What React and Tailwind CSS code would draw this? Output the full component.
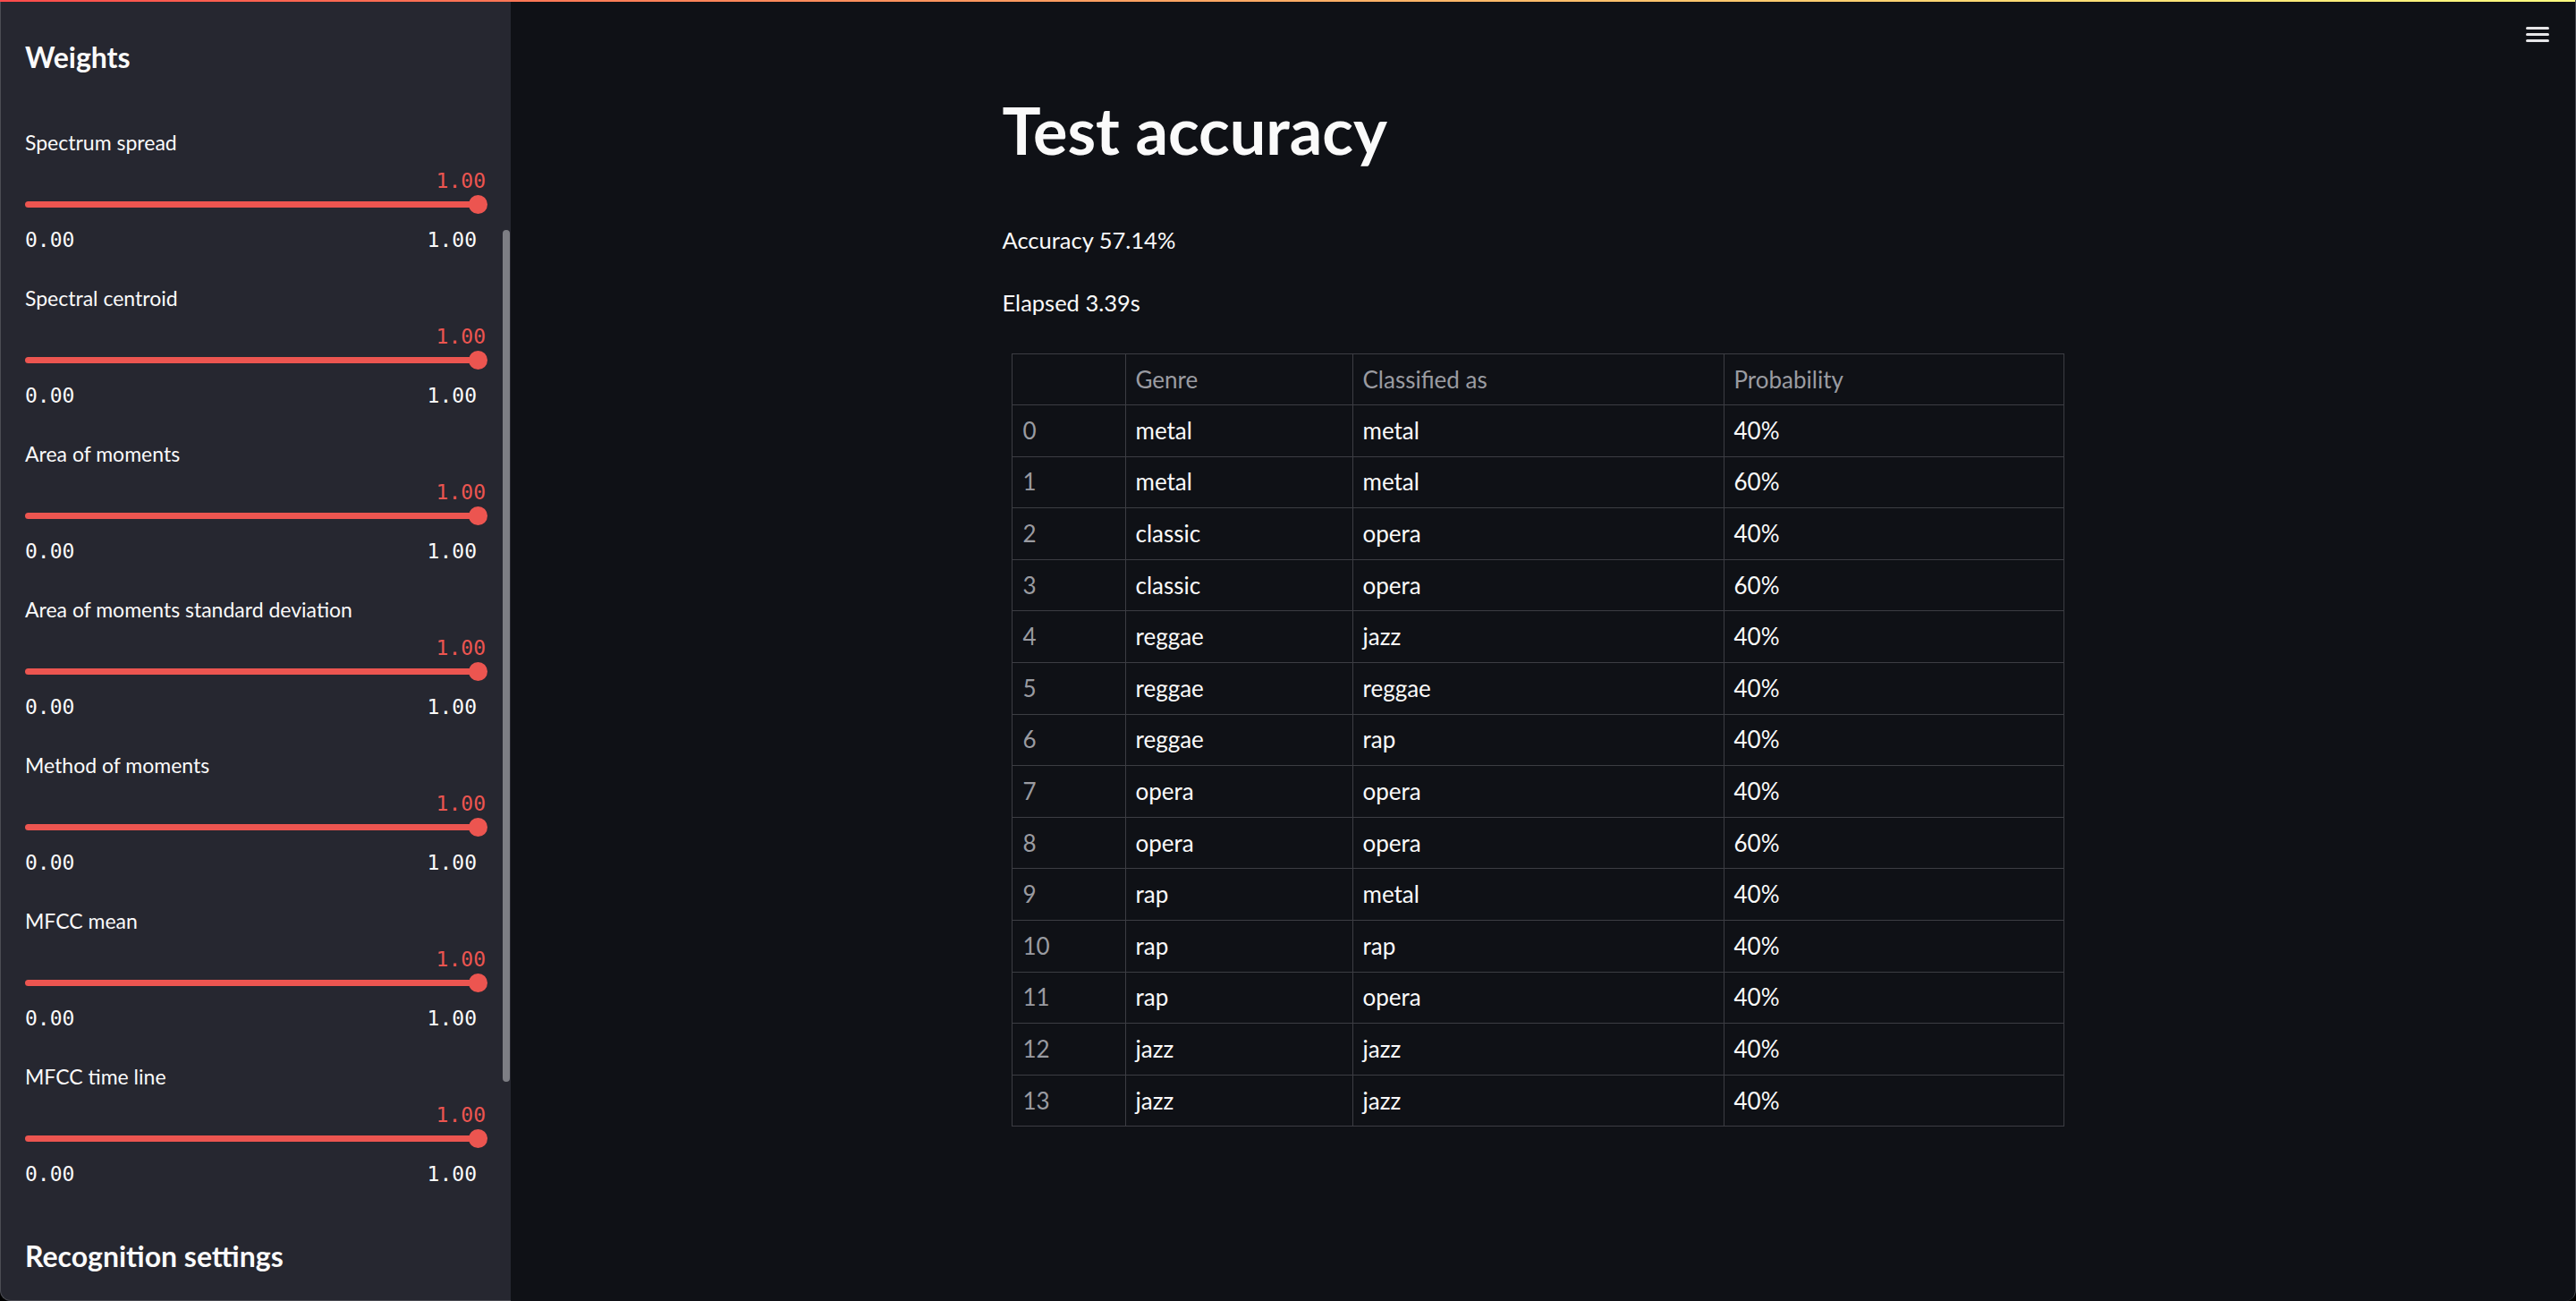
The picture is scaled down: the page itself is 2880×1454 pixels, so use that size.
import React from 'react';

// --- DATA ---
const weights = [
    'Spectrum spread',
    'Spectral centroid',
    'Area of moments',
    'Area of moments standard deviation',
    'Method of moments',
    'MFCC mean',
    'MFCC time line',
];

const rows = [
    ['metal', 'metal', '40%'],
    ['metal', 'metal', '60%'],
    ['classic', 'opera', '40%'],
    ['classic', 'opera', '60%'],
    ['reggae', 'jazz', '40%'],
    ['reggae', 'reggae', '40%'],
    ['reggae', 'rap', '40%'],
    ['opera', 'opera', '40%'],
    ['opera', 'opera', '60%'],
    ['rap', 'metal', '40%'],
    ['rap', 'rap', '40%'],
    ['rap', 'opera', '40%'],
    ['jazz', 'jazz', '40%'],
    ['jazz', 'jazz', '40%'],
];

const sans = "font-['Lato','Noto_Sans',sans-serif]";
const mono = "font-['DejaVu_Sans_Mono','Liberation_Mono',monospace]";

// --- COMPONENTS ---

function WeightSlider({ label }) {
    return (
        <div className="flex flex-col mb-[36px]">
            <div className="h-[30px] text-[23px] leading-[30px] text-[#fafafa]">{label}</div>
            {/* current value sits above the thumb */}
            <div className={`mt-[14px] h-[28px] text-right text-[23px] leading-[28px] text-[#ec5550] pr-[2px] ${mono}`}>1.00</div>
            <div className="mt-[1px] h-[22px] flex items-center">
                <div className="h-[7px] flex-1 rounded-full bg-[#ec5550]"></div>
                <div className="-ml-[4px] h-[21px] w-[21px] rounded-full bg-[#ec5550]"></div>
            </div>
            <div className={`mt-[15px] h-[28px] flex justify-between pr-[12px] text-[23px] leading-[28px] text-[#fafafa] ${mono}`}>
                <span>0.00</span>
                <span>1.00</span>
            </div>
        </div>
    );
}

function Sidebar() {
    return (
        <aside className="relative w-[571px] shrink-0 h-full bg-[#262730] rounded-bl-[12px] border-l border-b border-[#4b4c53] overflow-hidden">
            <div className="pl-[27px] pr-[26px] pt-[44px]">
                <h2 className="h-[40px] text-[32px] leading-[40px] font-bold text-[#fafafa] mb-[60px]">Weights</h2>
                {weights.map((w) => (
                    <WeightSlider key={w} label={w} />
                ))}
                <h2 className="mt-[58px] h-[40px] text-[32px] leading-[40px] font-bold text-[#fafafa]">Recognition settings</h2>
            </div>
            {/* scrollbar thumb */}
            <div className="absolute right-[1px] top-[257px] h-[952px] w-[8px] rounded-full bg-[#7d7e84]"></div>
        </aside>
    );
}

function ResultsTable() {
    return (
        <table className="ml-[10px] w-[1176px] border-collapse text-[26px] text-[#fafafa] table-fixed">
            <colgroup>
                <col className="w-[127px]" />
                <col className="w-[254px]" />
                <col className="w-[415px]" />
                <col className="w-[380px]" />
            </colgroup>
            <thead>
                <tr className="h-[57px]">
                    <th className="border border-[#3c3d43]"></th>
                    {['Genre', 'Classified as', 'Probability'].map((h) => (
                        <th key={h} className="border border-[#3c3d43] px-[11px] text-left font-normal text-[#9a9ba1]">{h}</th>
                    ))}
                </tr>
            </thead>
            <tbody>
                {rows.map((r, i) => (
                    <tr key={i} className="h-[57.6px]">
                        <td className="border border-[#3c3d43] px-[12px] text-[#9a9ba1]">{i}</td>
                        {r.map((c, j) => (
                            <td key={j} className="border border-[#3c3d43] px-[11px]">{c}</td>
                        ))}
                    </tr>
                ))}
            </tbody>
        </table>
    );
}

// --- MAIN PAGE ---

export default function App() {
    return (
        <div className={`w-[2880px] h-[1454px] bg-black ${sans}`}>
            <div className="relative flex h-[1454px] w-full bg-[#0f1116] rounded-b-[12px] border-r border-[#4b4c53]">
                {/* top decoration line */}
                <div className="absolute left-0 right-0 top-0 z-10 h-[2px] bg-gradient-to-r from-[#ff4b4b] to-[#fffd80]"></div>

                <Sidebar />

                <main className="relative flex-1 h-full">
                    {/* hamburger menu */}
                    <button className="absolute right-[29px] top-[30px] flex flex-col gap-[4px]">
                        <span className="block h-[3px] w-[26px] rounded-sm bg-[#e6e6e8]"></span>
                        <span className="block h-[3px] w-[26px] rounded-sm bg-[#e6e6e8]"></span>
                        <span className="block h-[3px] w-[26px] rounded-sm bg-[#e6e6e8]"></span>
                    </button>

                    <div className="mx-auto w-[1209px] pt-[104px]">
                        <h1 className="h-[82px] text-[72px] leading-[82px] font-bold text-[#fafafa]">Test accuracy</h1>
                        <p className="mt-[66px] h-[32px] text-[25.5px] leading-[32px] text-[#fafafa]">Accuracy 57.14%</p>
                        <p className="mt-[38px] h-[32px] text-[25.5px] leading-[32px] text-[#fafafa]">Elapsed 3.39s</p>
                        <div className="mt-[41px]">
                            <ResultsTable />
                        </div>
                    </div>
                </main>
            </div>
        </div>
    );
}
